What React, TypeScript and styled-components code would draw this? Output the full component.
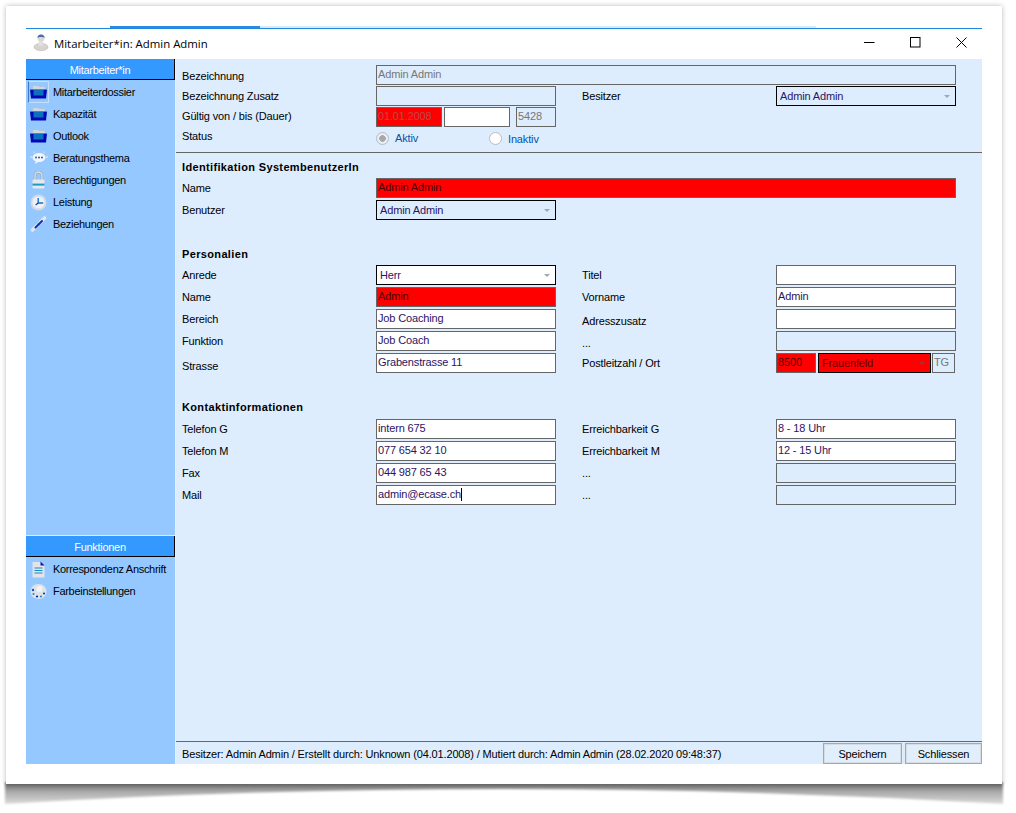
import React from "react";
import styled, { createGlobalStyle } from "styled-components";

const Global = createGlobalStyle`
  html, body { margin: 0; padding: 0; background: #fff; }
  body { font-family: "Liberation Sans", Arial, sans-serif; font-size: 11px; letter-spacing: -0.15px; color: #000; }
`;

const Page = styled.div`
  position: relative;
  width: 1016px;
  height: 813px;
  padding: 6px 0 0 6px;
  box-sizing: border-box;
  overflow: hidden;
`;
const Shadow = styled.svg`
  position: absolute;
  left: 0;
  top: 776px;
  width: 1016px;
  height: 37px;
`;
const Sheet = styled.div`
  position: relative;
  width: 996px;
  height: 778px;
  box-sizing: border-box;
  padding: 20px;
  background: #fff;
  box-shadow: 0 0 5px rgba(0, 0, 0, 0.28);
`;
const Win = styled.div`
  display: flex;
  flex-direction: column;
  height: 738px;
`;
const TabStrip = styled.div`
  display: flex;
  height: 2px;
  padding-left: 84px;
  padding-right: 166px;
`;
const TabActive = styled.div`
  width: 150px;
  background: #2a8ae0;
`;
const TabRest = styled.div`
  flex: 1;
  background: #dbeafa;
`;
const TitleBar = styled.div`
  display: flex;
  align-items: center;
  height: 30px;
  border-top: 1px solid #1e88e0;
  padding-left: 7px;
`;
const TitleIcon = styled.div`
  display: flex;
  margin-bottom: 4px;
`;
const TitleText = styled.span`
  margin-left: 5px;
  margin-bottom: 2px;
  font-family: "Open Sans", sans-serif;
  font-size: 11.4px;
  letter-spacing: 0;
`;
const WinControls = styled.div`
  margin-left: auto;
  padding-right: 9px;
  display: flex;
  align-items: center;
  gap: 22px;
`;
const WinBtn = styled.div`
  width: 24px;
  height: 30px;
  display: flex;
  align-items: center;
  justify-content: center;
  margin-bottom: 3px;
`;
const Body = styled.div`
  flex: 1;
  display: flex;
  min-height: 0;
`;
const Sidebar = styled.div`
  width: 149px;
  background: #94c8ff;
  display: flex;
  flex-direction: column;
  letter-spacing: -0.3px;
`;
const SideSection = styled.div<{ $h?: number }>`
  ${(p) => (p.$h ? `height:${p.$h}px;` : "")}
`;
const SideHeader = styled.div<{ $line?: boolean }>`
  height: 21px;
  padding-top: 1px;
  background: #3399ff;
  color: #fff;
  display: flex;
  align-items: center;
  justify-content: center;
  border-right: 1px solid #000;
  border-bottom: 1px solid #000;
  box-sizing: border-box;
  margin-bottom: 1px;
  ${(p) => (p.$line ? "box-shadow: 0 -1px 0 #dcedff;" : "")}
`;
const SideItem = styled.div`
  height: 22px;
  display: flex;
  align-items: center;
  white-space: nowrap;
`;
const IconBox = styled.div<{ $sel?: boolean }>`
  width: 21px;
  height: 22px;
  margin-left: 2px;
  margin-right: 4px;
  box-sizing: border-box;
  display: flex;
  flex: none;
  align-items: center;
  justify-content: center;
  border: 1px solid ${(p) => (p.$sel ? "#c4e0ff" : "transparent")};
  border-left-color: ${(p) => (p.$sel ? "#3a78c8" : "transparent")};
`;
const Content = styled.div`
  flex: 1;
  background: #ddedfe;
  border-left: 1px solid #e6f1ff;
  display: flex;
  flex-direction: column;
  min-width: 0;
`;
const FormArea = styled.div`
  flex: 1;
  padding-top: 6px;
  display: flex;
  flex-direction: column;
`;
const Group = styled.div<{ $top?: number; $pitch?: number }>`
  display: flex;
  flex-direction: column;
  gap: ${(p) => p.$pitch ?? 2}px;
  padding-left: 6px;
  margin-top: ${(p) => p.$top ?? 0}px;
`;
const Row = styled.div`
  display: grid;
  grid-template-columns: 194px 180px 220px 180px;
  height: 20px;
`;
const Label = styled.div<{ $second?: boolean; $shift?: number }>`
  padding-left: ${(p) => (p.$second ? 26 : 0)}px;
  line-height: 20px;
  margin-top: ${(p) => p.$shift ?? 0}px;
  white-space: nowrap;
`;
const WideField = styled.div`
  grid-column: 2 / 5;
  width: 580px;
`;
const Field = styled.div<{ $tone?: "white" | "ro" | "red"; $w?: number; $muted?: boolean; $gap?: number }>`
  box-sizing: border-box;
  height: 20px;
  ${(p) => (p.$w ? `width:${p.$w}px;flex:none;` : "")}
  margin-left: ${(p) => p.$gap ?? 0}px;
  border: 1px solid #666;
  padding-left: 1px;
  line-height: 16px;
  white-space: nowrap;
  overflow: hidden;
  background: ${(p) => (p.$tone === "red" ? "#ff0000" : p.$tone === "ro" ? "transparent" : "#fff")};
  color: ${(p) =>
    p.$muted
      ? p.$tone === "red"
        ? "#b84848"
        : "#777"
      : p.$tone === "red"
        ? "#4a0000"
        : "#2c1464"};
`;
const Combo = styled.div<{ $tone?: "white" | "ro" | "red"; $w?: number }>`
  box-sizing: border-box;
  height: 20px;
  ${(p) => (p.$w ? `width:${p.$w}px;flex:none;` : "")}
  border: 1px solid #000;
  padding: 0 5px 0 3px;
  display: flex;
  align-items: center;
  justify-content: space-between;
  background: ${(p) => (p.$tone === "red" ? "#ff0000" : p.$tone === "ro" ? "transparent" : "#fff")};
  color: ${(p) => (p.$tone === "red" ? "#5a0000" : "#2c1464")};
`;
const Arrow = styled.span<{ $dark?: boolean }>`
  width: 0;
  height: 0;
  border-left: 3px solid transparent;
  border-right: 3px solid transparent;
  border-top: 3px solid ${(p) => (p.$dark ? "#a83030" : "#a0a8b0")};
`;
const FieldLine = styled.div`
  display: flex;
  gap: 2px;
`;
const Caret = styled.span`
  display: inline-block;
  width: 1px;
  height: 13px;
  background: #000;
  vertical-align: -3px;
`;
const StatusRow = styled.div`
  display: grid;
  grid-template-columns: 194px 113px 1fr;
  height: 22px;
  padding-left: 6px;
  align-items: center;
`;
const RadioWrap = styled.div<{ $shift?: number }>`
  display: flex;
  align-items: center;
  color: #0a50a8;
  margin-top: ${(p) => p.$shift ?? 0}px;
`;
const RadioDot = styled.span<{ $on?: boolean }>`
  box-sizing: border-box;
  width: 13px;
  height: 13px;
  border-radius: 50%;
  border: 1px solid #b4bcc6;
  margin-right: 6px;
  background: ${(p) => (p.$on ? "radial-gradient(circle, #a8a8a8 0 3px, #e8eef6 3.6px)" : "#fff")};
`;
const Sep = styled.div`
  height: 1px;
  background: #666;
  margin-top: 3px;
`;
const Heading = styled.div<{ $top: number }>`
  font-weight: bold;
  letter-spacing: 0.35px;
  color: #000;
  padding-left: 6px;
  margin-top: ${(p) => p.$top}px;
  line-height: 14px;
  height: 14px;
`;
const StatusBar = styled.div`
  height: 23px;
  border-top: 1px solid #667;
  display: flex;
  align-items: center;
  padding-left: 6px;
  box-sizing: border-box;
`;
const StatusText = styled.div`
  flex: 1;
  white-space: nowrap;
  padding-top: 1px;
`;
const BtnRow = styled.div`
  display: flex;
  gap: 3px;
  align-self: flex-end;
`;
const Btn = styled.div<{ $w: number }>`
  width: ${(p) => p.$w}px;
  height: 21px;
  box-sizing: border-box;
  display: flex;
  align-items: center;
  justify-content: center;
  background: #e1eefc;
  border: 2px solid #d6dce2;
  outline: 1px solid #a6a8aa;
  outline-offset: -1px;
`;

const Person = () => (
  <svg width="16" height="18" viewBox="0 0 16 18">
    <ellipse cx="8" cy="14" rx="7" ry="3.6" fill="#d8d4cc" stroke="#b4b4b4" strokeWidth=".6" />
    <path d="M5.5 13L6 8h4l.5 5z" fill="#e0e0e0" />
    <circle cx="8" cy="5" r="3.6" fill="#dcd8d4" />
    <path d="M4.5 5a3.5 3.5 0 0 1 7 0c-1.5-1.4-5.5-1.4-7 0z" fill="#4a6ea6" />
  </svg>
);
const Folder = () => (
  <svg width="17" height="14" viewBox="0 0 17 14">
    <path d="M2.5 5V1.5L4 .5h4l1 1h5l1 1V5z" fill="#cfd8e2" stroke="#aab8c4" strokeWidth=".5" />
    <path d="M0 4.5h17l-1 9H1z" fill="#0008b8" />
    <rect x="3.5" y="5" width="10" height="5.5" fill="#0c70c0" />
    <rect x="0" y="4" width="17" height="1" fill="#2a90d8" />
  </svg>
);
const Chat = () => (
  <svg width="18" height="14" viewBox="0 0 18 14">
    <ellipse cx="9" cy="6.5" rx="6.5" ry="4.5" fill="#f2f6fb" />
    <path d="M6 10l-1 3 4-2.5z" fill="#f2f6fb" />
    <circle cx="6" cy="6.5" r="1" fill="#2a5ab0" />
    <circle cx="9" cy="6.5" r="1" fill="#2a5ab0" />
    <circle cx="12" cy="6.5" r="1" fill="#2a5ab0" />
    <circle cx="1" cy="6" r=".7" fill="#fff" />
    <circle cx="17" cy="6" r=".7" fill="#fff" />
    <circle cx="4" cy="1" r=".6" fill="#fff" />
    <circle cx="14" cy="1" r=".6" fill="#fff" />
  </svg>
);
const Lock = () => (
  <svg width="15" height="18" viewBox="0 0 15 18">
    <path d="M4 9V4.5a3.5 3.5 0 0 1 7 0V9" fill="none" stroke="#8f9aa8" strokeWidth="2.4" />
    <path d="M4 9V4.5a3.5 3.5 0 0 1 7 0V9" fill="none" stroke="#dde1e7" strokeWidth="1.4" />
    <rect x="1.5" y="8.5" width="12" height="9" rx="1" fill="#e6e8ec" />
    <rect x="1.5" y="12.6" width="12" height="2" fill="#1c9ac8" />
  </svg>
);
const Clock = () => (
  <svg width="17" height="17" viewBox="0 0 17 17">
    <circle cx="8.5" cy="8.5" r="8" fill="#d4dae2" />
    <circle cx="8.5" cy="8.5" r="6" fill="#eef2f7" />
    <path d="M8.2 4v5h5" fill="none" stroke="#1a6ec8" strokeWidth="1.4" />
    <path d="M8.2 9l-2.6 2" stroke="#123a90" strokeWidth="1.1" />
  </svg>
);
const LinkIcon = () => (
  <svg width="17" height="17" viewBox="0 0 17 17">
    <path d="M2.5 14L7 9.5" stroke="#e0e6ee" strokeWidth="3.6" strokeLinecap="round" />
    <path d="M10 6.5L14.5 2" stroke="#e0e6ee" strokeWidth="3.6" strokeLinecap="round" />
    <path d="M5.5 11.5L12 5" stroke="#0c30b4" strokeWidth="2" strokeLinecap="round" />
  </svg>
);
const Doc = () => (
  <svg width="13" height="17" viewBox="0 0 13 17">
    <path d="M.5 1h8L12.5 5v11.5H.5z" fill="#e2e4ea" />
    <path d="M8.5 0.5L12.5 4.6H8.5z" fill="#1414a8" />
    <path d="M2.5 7h8M2.5 9.5h8M2.5 12h8" stroke="#1c8cc4" strokeWidth="1" />
  </svg>
);
const Palette = () => (
  <svg width="17" height="17" viewBox="0 0 17 17">
    <path d="M8.5 1C13 1 16.5 4 16.5 8.5S13 16 8.5 16 .5 13 .5 8.5 4 1 8.5 1z" fill="#dfe3e8" />
    <circle cx="9.5" cy="6" r="3" fill="#f2f4f7" />
    <circle cx="3" cy="7" r="1.2" fill="#1c4fb8" />
    <circle cx="3.5" cy="11" r="1.1" fill="#1a8cc8" />
    <circle cx="7" cy="13.5" r="1.1" fill="#0c1fa8" />
    <circle cx="11" cy="13.5" r="1.1" fill="#1a8cc8" />
    <circle cx="14" cy="10.5" r="1" fill="#0c1fa8" />
  </svg>
);

export default function App() {
  const main: [React.ReactNode, string][] = [
    [<Folder />, "Mitarbeiterdossier"],
    [<Folder />, "Kapazität"],
    [<Folder />, "Outlook"],
    [<Chat />, "Beratungsthema"],
    [<Lock />, "Berechtigungen"],
    [<Clock />, "Leistung"],
    [<LinkIcon />, "Beziehungen"],
  ];
  return (
    <Page>
      <Global />
      <Shadow viewBox="0 776 1016 37">
        <defs>
          <linearGradient id="sg" gradientUnits="userSpaceOnUse" x1="0" y1="784" x2="0" y2="805">
            <stop offset="0" stopColor="#707070" />
            <stop offset="0.35" stopColor="#a8a8a8" />
            <stop offset="1" stopColor="#e0e0e0" />
          </linearGradient>
          <filter id="sb" x="-5%" y="-50%" width="110%" height="200%">
            <feGaussianBlur stdDeviation="1" />
          </filter>
        </defs>
        <path d="M5 782H1003V804Q504 774 5 804Z" fill="url(#sg)" filter="url(#sb)" />
      </Shadow>
      <Sheet>
        <Win>
          <TabStrip>
            <TabActive />
            <TabRest />
          </TabStrip>
          <TitleBar>
            <TitleIcon>
              <Person />
            </TitleIcon>
            <TitleText>Mitarbeiter*in: Admin Admin</TitleText>
            <WinControls>
              <WinBtn>
                <svg width="11" height="11" viewBox="0 0 11 11">
                  <path d="M0 5.5h10.5" stroke="#000" />
                </svg>
              </WinBtn>
              <WinBtn>
                <svg width="11" height="11" viewBox="0 0 11 11">
                  <rect x=".5" y=".5" width="9.5" height="9.5" fill="none" stroke="#000" />
                </svg>
              </WinBtn>
              <WinBtn>
                <svg width="11" height="11" viewBox="0 0 11 11">
                  <path d="M.5.5l10 10M10.5.5l-10 10" stroke="#000" />
                </svg>
              </WinBtn>
            </WinControls>
          </TitleBar>
          <Body>
            <Sidebar>
              <SideSection $h={477}>
                <SideHeader>Mitarbeiter*in</SideHeader>
                {main.map(([icon, text], i) => (
                  <SideItem key={text}>
                    <IconBox $sel={i === 0}>{icon}</IconBox>
                    {text}
                  </SideItem>
                ))}
              </SideSection>
              <SideSection>
                <SideHeader $line>Funktionen</SideHeader>
                <SideItem>
                  <IconBox>
                    <Doc />
                  </IconBox>
                  Korrespondenz Anschrift
                </SideItem>
                <SideItem>
                  <IconBox>
                    <Palette />
                  </IconBox>
                  Farbeinstellungen
                </SideItem>
              </SideSection>
            </Sidebar>
            <Content>
              <FormArea>
                <Group $pitch={1}>
                  <Row>
                    <Label $shift={1}>Bezeichnung</Label>
                    <WideField>
                      <Field $tone="ro" $muted>
                        Admin Admin
                      </Field>
                    </WideField>
                  </Row>
                  <Row>
                    <Label>Bezeichnung Zusatz</Label>
                    <Field $tone="ro" />
                    <Label $second>Besitzer</Label>
                    <Combo $tone="ro">
                      Admin Admin
                      <Arrow />
                    </Combo>
                  </Row>
                  <Row>
                    <Label $shift={-1}>Gültig von / bis (Dauer)</Label>
                    <FieldLine>
                      <Field $tone="red" $muted $w={66}>
                        01.01.2008
                      </Field>
                      <Field $w={66} />
                      <Field $tone="ro" $muted $w={40} $gap={4}>
                        5428
                      </Field>
                    </FieldLine>
                  </Row>
                </Group>
                <StatusRow>
                  <Label $shift={-5}>Status</Label>
                  <RadioWrap>
                    <RadioDot $on />
                    Aktiv
                  </RadioWrap>
                  <RadioWrap $shift={1}>
                    <RadioDot />
                    Inaktiv
                  </RadioWrap>
                </StatusRow>
                <Sep />
                <Heading $top={7}>Identifikation SystembenutzerIn</Heading>
                <Group $top={4}>
                  <Row>
                    <Label>Name</Label>
                    <WideField>
                      <Field $tone="red">Admin Admin</Field>
                    </WideField>
                  </Row>
                  <Row>
                    <Label>Benutzer</Label>
                    <Combo $tone="ro">
                      Admin Admin
                      <Arrow />
                    </Combo>
                  </Row>
                </Group>
                <Heading $top={27}>Personalien</Heading>
                <Group $top={4}>
                  <Row>
                    <Label>Anrede</Label>
                    <Combo>
                      Herr
                      <Arrow />
                    </Combo>
                    <Label $second>Titel</Label>
                    <Field />
                  </Row>
                  <Row>
                    <Label>Name</Label>
                    <Field $tone="red">Admin</Field>
                    <Label $second>Vorname</Label>
                    <Field>Admin</Field>
                  </Row>
                  <Row>
                    <Label>Bereich</Label>
                    <Field>Job Coaching</Field>
                    <Label $second $shift={2}>
                      Adresszusatz
                    </Label>
                    <Field />
                  </Row>
                  <Row>
                    <Label>Funktion</Label>
                    <Field>Job Coach</Field>
                    <Label $second $shift={2}>
                      ...
                    </Label>
                    <Field $tone="ro" />
                  </Row>
                  <Row>
                    <Label $shift={3}>Strasse</Label>
                    <Field>Grabenstrasse 11</Field>
                    <Label $second>Postleitzahl / Ort</Label>
                    <FieldLine>
                      <Field $tone="red" $w={40}>
                        8500
                      </Field>
                      <Combo $tone="red" $w={113}>
                        Frauenfeld
                        <Arrow $dark />
                      </Combo>
                      <Field $tone="ro" $muted $w={23} $gap={-1}>
                        TG
                      </Field>
                    </FieldLine>
                  </Row>
                </Group>
                <Heading $top={27}>Kontaktinformationen</Heading>
                <Group $top={5}>
                  <Row>
                    <Label>Telefon G</Label>
                    <Field>intern 675</Field>
                    <Label $second>Erreichbarkeit G</Label>
                    <Field>8 - 18 Uhr</Field>
                  </Row>
                  <Row>
                    <Label>Telefon M</Label>
                    <Field>077 654 32 10</Field>
                    <Label $second>Erreichbarkeit M</Label>
                    <Field>12 - 15 Uhr</Field>
                  </Row>
                  <Row>
                    <Label>Fax</Label>
                    <Field>044 987 65 43</Field>
                    <Label $second>...</Label>
                    <Field $tone="ro" />
                  </Row>
                  <Row>
                    <Label>Mail</Label>
                    <Field>
                      admin@ecase.ch
                      <Caret />
                    </Field>
                    <Label $second>...</Label>
                    <Field $tone="ro" />
                  </Row>
                </Group>
              </FormArea>
              <StatusBar>
                <StatusText>
                  Besitzer: Admin Admin / Erstellt durch: Unknown (04.01.2008) / Mutiert durch: Admin Admin (28.02.2020 09:48:37)
                </StatusText>
                <BtnRow>
                  <Btn $w={79}>Speichern</Btn>
                  <Btn $w={77}>Schliessen</Btn>
                </BtnRow>
              </StatusBar>
            </Content>
          </Body>
        </Win>
      </Sheet>
    </Page>
  );
}
